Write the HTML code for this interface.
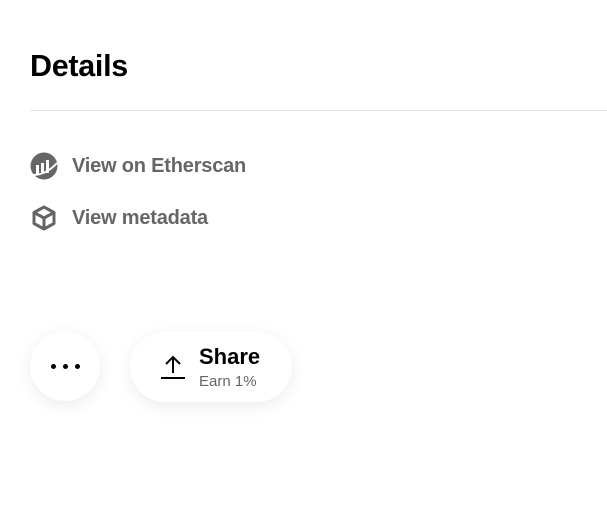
<!DOCTYPE html>
<html><head><style>
body{margin:0;width:607px;height:519px;background:#fff;font-family:"Liberation Sans",sans-serif;position:relative;overflow:hidden}
.a{position:absolute}
h1{position:absolute;left:30px;top:49px;margin:0;font-size:30.5px;font-weight:700;color:#000;letter-spacing:-0.3px}
.row{position:absolute;left:72px;font-size:20px;font-weight:700;color:#666;letter-spacing:-0.2px}
.btn{position:absolute;background:#fff;box-shadow:0 4px 16px rgba(0,0,0,0.08)}
</style></head><body>
<h1>Details</h1>
<div class="a" style="left:30px;top:110px;width:577px;height:1px;background:#e5e5e5"></div>
<svg class="a" style="left:30px;top:152px" width="28" height="28" viewBox="0 0 28 28">
<circle cx="14" cy="14" r="13.5" fill="#666"/>
<rect x="6" y="13" width="3" height="9" fill="#fff"/><rect x="11" y="11" width="3" height="11" fill="#fff"/><rect x="16" y="8" width="3" height="13" fill="#fff"/>
<path d="M3 23 Q16 23 27 11" stroke="#fff" stroke-width="2" fill="none"/>
</svg>
<div class="row" style="top:155px">View on Etherscan</div>
<svg class="a" style="left:31px;top:205px" width="26" height="26" viewBox="0 0 26 26" fill="none" stroke="#666" stroke-width="3" stroke-linejoin="round">
<path d="M13 2 L23 7.5 L23 18.5 L13 24 L3 18.5 L3 7.5 Z"/><path d="M3 7.5 L13 13 L23 7.5 M13 13 L13 24"/>
</svg>
<div class="row" style="top:207px">View metadata</div>
<div class="btn" style="left:30px;top:331px;width:70px;height:70px;border-radius:50%"></div>
<div class="a" style="left:51px;top:364px;width:5px;height:5px;border-radius:50%;background:#000"></div>
<div class="a" style="left:63px;top:364px;width:5px;height:5px;border-radius:50%;background:#000"></div>
<div class="a" style="left:75px;top:364px;width:5px;height:5px;border-radius:50%;background:#000"></div>
<div class="btn" style="left:130px;top:332px;width:162px;height:70px;border-radius:35px"></div>
<svg class="a" style="left:159px;top:354px" width="28" height="26" viewBox="0 0 28 26" fill="none" stroke="#000" stroke-width="2">
<path d="M14 19 L14 3 M7 10 L14 3 L21 10"/><path d="M2 24 L26 24"/>
</svg>
<div class="a" style="left:199px;top:344px;font-size:22px;font-weight:700;color:#000">Share</div>
<div class="a" style="left:199px;top:373px;font-size:15px;color:#666">Earn 1%</div>
</body></html>
